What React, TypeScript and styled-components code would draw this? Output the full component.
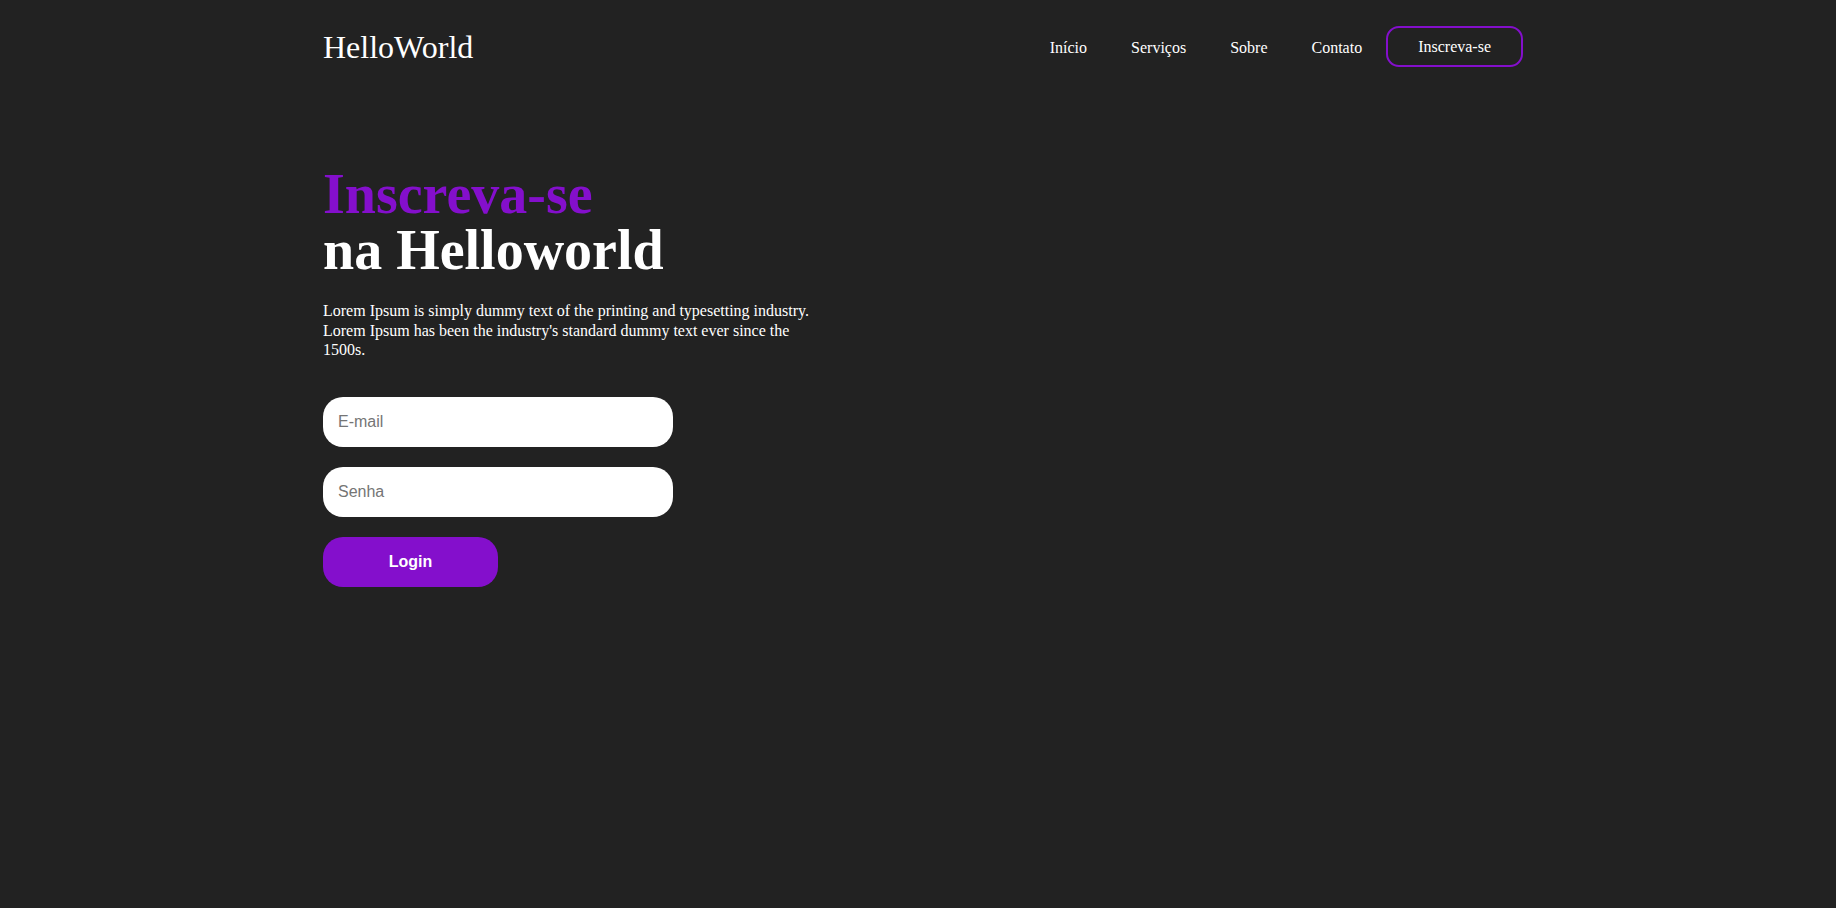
import React from "react";
import styled, { createGlobalStyle } from "styled-components";

const PURPLE = "#840fcc";

const GlobalStyle = createGlobalStyle`
  html, body {
    margin: 0;
    padding: 0;
    background: #222222;
    color: #ffffff;
    font-family: "Liberation Serif", "Times New Roman", serif;
  }
  * { box-sizing: border-box; }
`;

const Page = styled.div`
  min-height: 908px;
  background: #222222;
`;

const Container = styled.div`
  width: 1200px;
  margin: 0 auto;
  position: relative;
  left: 5px;
`;

const Header = styled.header`
  height: 93px;
  display: flex;
  align-items: center;
  justify-content: space-between;
`;

const Logo = styled.a`
  font-size: 32px;
  color: #ffffff;
  text-decoration: none;
  padding-top: 2px;
`;

const Nav = styled.nav`
  display: flex;
  align-items: center;
`;

const NavLink = styled.a`
  font-size: 16px;
  color: #ffffff;
  text-decoration: none;
  padding: 2px 22px 0;
  line-height: 18px;
`;

const NavButton = styled.a`
  display: flex;
  align-items: center;
  height: 41px;
  padding: 1px 30px 0;
  margin-left: 2px;
  border: 2px solid ${PURPLE};
  border-radius: 13px;
  font-size: 16px;
  color: #ffffff;
  text-decoration: none;
`;

const Hero = styled.section`
  padding-top: 73px;
`;

const Title = styled.h1<{ $accent?: boolean }>`
  margin: 0;
  font-size: 56px;
  line-height: 56px;
  font-weight: 700;
  color: ${(p) => (p.$accent ? PURPLE : "#ffffff")};
`;

const Lead = styled.p`
  width: 500px;
  margin: 23px 0 0;
  font-size: 16px;
  line-height: 19.5px;
`;

const Form = styled.form`
  display: flex;
  flex-direction: column;
  align-items: flex-start;
  gap: 20px;
  margin-top: 37px;
`;

const Input = styled.input`
  width: 350px;
  height: 50px;
  border: none;
  border-radius: 20px;
  background: #ffffff;
  padding: 0 15px;
  font-family: "Liberation Sans", Arial, sans-serif;
  font-size: 16px;
  color: #222;
  outline: none;
  &::placeholder {
    color: #757575;
  }
`;

const LoginButton = styled.button`
  width: 175px;
  height: 50px;
  border: none;
  border-radius: 20px;
  background: ${PURPLE};
  color: #ffffff;
  font-family: "Liberation Sans", Arial, sans-serif;
  font-weight: 700;
  font-size: 16px;
  cursor: pointer;
`;

export default function App() {
  return (
    <Page>
      <GlobalStyle />
      <Container>
        <Header>
          <Logo href="#">HelloWorld</Logo>
          <Nav>
            <NavLink href="#">Início</NavLink>
            <NavLink href="#">Serviços</NavLink>
            <NavLink href="#">Sobre</NavLink>
            <NavLink href="#">Contato</NavLink>
            <NavButton href="#">Inscreva-se</NavButton>
          </Nav>
        </Header>
        <Hero>
          <Title $accent>Inscreva-se</Title>
          <Title>na Helloworld</Title>
          <Lead>
            Lorem Ipsum is simply dummy text of the printing and typesetting
            industry. Lorem Ipsum has been the industry's standard dummy text
            ever since the 1500s.
          </Lead>
          <Form onSubmit={(e) => e.preventDefault()}>
            <Input type="email" placeholder="E-mail" />
            <Input type="password" placeholder="Senha" />
            <LoginButton type="submit">Login</LoginButton>
          </Form>
        </Hero>
      </Container>
    </Page>
  );
}
